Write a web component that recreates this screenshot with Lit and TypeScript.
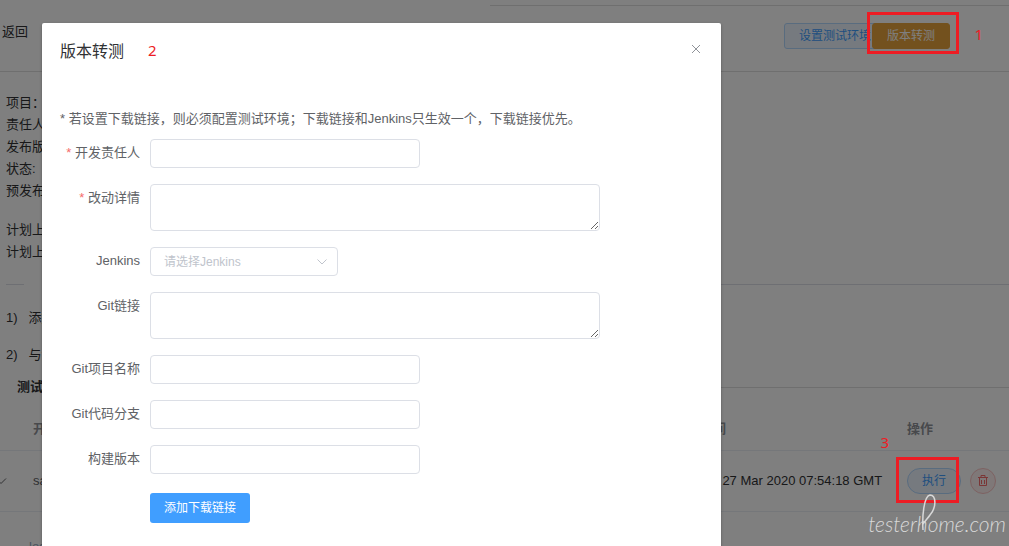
import { LitElement, html, css } from "lit";
import { customElement } from "lit/decorators.js";

const sans = css`"Liberation Sans", "Noto Sans CJK SC", sans-serif`;

@customElement("release-page")
class ReleasePage extends LitElement {
  static styles = css`
    :host { display: block; font: 13px/22px ${sans}; color: #303133; white-space: nowrap; }
    .tabs { height: 5px; margin-left: 490px; border-bottom: 1px solid #dedede; }
    .bar { display: flex; align-items: center; justify-content: space-between; height: 51px; padding: 0 59px 14px 2px; border-bottom: 1px solid #dedede; }
    .back { color: #303133; text-decoration: none; }
    .actions { display: flex; padding-top: 8px; }
    button { box-sizing: border-box; height: 26px; font: 12px/24px ${sans}; border: 1px solid #b3d8ff; background: #ecf5ff; color: #409eff; border-radius: 3px; padding: 0 14px; }
    .env { margin-right: -14px; }
    .warn { background: #e6a23c; border-color: #e6a23c; color: #fff; position: relative; }
    .info { padding: 20px 0 0 6px; }
    p { margin: 0; }
    .plan { padding: 17px 0 0 6px; }
    .divider { display: flex; align-items: center; height: 22px; margin: 10px 0 0 6px; }
    .divider::before, .divider::after { content: ""; height: 1px; background: #dcdfe6; }
    .divider::before { width: 18px; }
    .divider::after { flex: 1; }
    .divider span { padding: 0 18px; }
    .steps { display: grid; gap: 15px; padding: 12px 0 0 6px; }
    h3 { display: flex; align-items: center; gap: 16px; margin: 10px 0 0 17px; font-size: 13px; line-height: 22px; }
    h3::after { content: ""; flex: 1; height: 1px; background: #dedede; }
    table { width: 100%; table-layout: fixed; border-collapse: separate; border-spacing: 0; margin-top: 10px; }
    th, td { box-sizing: border-box; padding: 0; text-align: left; border-bottom: 1px solid #ebeef5; }
    th { height: 43px; color: #909399; font-weight: 700; }
    td { height: 61px; color: #606266; }
    .c-exp { width: 33px; }
    .c-time { width: 207px; }
    .c-op { width: 102px; }
    .ops { display: flex; gap: 9px; align-items: center; }
    .run { border-radius: 13px; }
    .del { width: 26px; padding: 0; border-radius: 50%; background: #fef0f0; border-color: #fbc4c4; color: #f56c6c; display: grid; place-items: center; }
    svg { display: block; fill: none; stroke: currentColor; }
    .time { color: #303133; }
    .detail { padding: 24px 0 0 29px; color: #99a9bf; }
  `;
  render() {
    return html`
      <div class="tabs"></div>
      <header class="bar">
        <a class="back" href="#">返回</a>
        <div class="actions">
          <button class="env">设置测试环境</button>
          <button class="warn">版本转测</button>
        </div>
      </header>
      <section class="info">
        <p>项目：</p><p>责任人:</p><p>发布版本:</p><p>状态:</p><p>预发布时间:</p>
      </section>
      <section class="plan"><p>计划上线时间:</p><p>计划上线版本:</p></section>
      <div class="divider"><span>说明</span></div>
      <section class="steps"><p>1)&nbsp;&nbsp; 添加测试环境</p><p>2)&nbsp;&nbsp; 与测试确认</p></section>
      <h3>测试记录</h3>
      <table>
        <colgroup><col class="c-exp" /><col /><col class="c-time" /><col class="c-op" /></colgroup>
        <thead><tr><th></th><th>开发</th><th>时间</th><th>操作</th></tr></thead>
        <tbody>
          <tr>
            <td><svg width="12" height="8" viewBox="-6 0 12 8"><path d="M-10 1.5 -5 6.5 0 1.5" /></svg></td>
            <td>sa</td>
            <td class="time">Fri, 27 Mar 2020 07:54:18 GMT</td>
            <td>
              <div class="ops">
                <button class="run">执行</button>
                <button class="del" aria-label="删除">
                  <svg width="12" height="12" viewBox="0 0 12 12"><path d="M1 2.500h10M4 2.500V.5h4v2M2.500 2.500v8h7v-8M4.500 5v4M7.500 5v4" /></svg>
                </button>
              </div>
            </td>
          </tr>
        </tbody>
      </table>
      <div class="detail">log</div>
    `;
  }
}

@customElement("transfer-dialog")
class TransferDialog extends LitElement {
  static styles = css`
    :host { display: block; box-sizing: border-box; background: #fff; border-radius: 2px; box-shadow: 0 1px 3px rgba(0, 0, 0, 0.3); padding: 18px; font: 13px/20px ${sans}; color: #606266; }
    header { display: flex; justify-content: space-between; align-items: flex-start; }
    h2 { margin: 0; font-size: 16px; line-height: 22px; font-weight: 400; color: #303133; }
    .close { border: 0; background: none; padding: 3px 2px; color: #909399; }
    svg { display: block; fill: none; stroke: currentColor; }
    .note { margin: 46px 0 10px; }
    form { display: grid; grid-template-columns: 80px minmax(0, 1fr); column-gap: 10px; row-gap: 16px; }
    label { text-align: right; line-height: 27px; white-space: nowrap; }
    .req::before { content: "* "; color: #f56c6c; }
    input, textarea, select { display: block; box-sizing: border-box; width: 100%; margin: 0; border: 1px solid #dcdfe6; border-radius: 4px; background: #fff; font: 12px/18px ${sans}; color: #606266; padding: 0 13px; outline: 0; }
    input { max-width: 270px; height: 29px; }
    textarea { max-width: 450px; height: 47px; padding: 5px 13px; resize: vertical; }
    .pick { position: relative; max-width: 188px; }
    select { appearance: none; height: 29px; color: #c0c4cc; }
    .arrow { position: absolute; right: 10px; top: 11px; color: #c0c4cc; pointer-events: none; }
    .add { grid-column: 2; justify-self: start; height: 30px; margin: 3px 0 30px; padding: 0 14px; border: 0; border-radius: 3px; background: #409eff; color: #fff; font: 12px/30px ${sans}; }
  `;
  render() {
    return html`
      <header>
        <h2>版本转测</h2>
        <button class="close" aria-label="关闭">
          <svg width="10" height="10" viewBox="0 0 10 10"><path d="M1 1 9 9M9 1 1 9" /></svg>
        </button>
      </header>
      <p class="note">* 若设置下载链接，则必须配置测试环境；下载链接和Jenkins只生效一个，下载链接优先。</p>
      <form @submit=${(e: Event) => e.preventDefault()}>
        <label class="req" for="owner">开发责任人</label><input id="owner" />
        <label class="req" for="changes">改动详情</label><textarea id="changes"></textarea>
        <label for="jenkins">Jenkins</label>
        <div class="pick">
          <select id="jenkins"><option>请选择Jenkins</option></select>
          <svg class="arrow" width="12" height="8" viewBox="0 0 12 8"><path d="M1.500 1.500 6 6 10.500 1.500" /></svg>
        </div>
        <label for="git">Git链接</label><textarea id="git"></textarea>
        <label for="project">Git项目名称</label><input id="project" />
        <label for="branch">Git代码分支</label><input id="branch" />
        <label for="build">构建版本</label><input id="build" />
        <button class="add" type="button">添加下载链接</button>
      </form>
    `;
  }
}

@customElement("app-root")
class AppRoot extends LitElement {
  static styles = css`
    :host { display: block; position: relative; height: 100vh; overflow: hidden; background: #fff; }
    .mask { position: absolute; inset: 0; overflow: hidden; display: flex; align-items: flex-start; padding: 23px 42px 0; background: rgba(0, 0, 0, 0.5); }
    transfer-dialog { flex: 0 1 679px; min-height: 100vh; }
    .box { position: absolute; box-sizing: border-box; border: 3px solid #ed1c24; }
    .box-transfer { right: 50px; top: 12px; width: 92px; height: 42px; }
    .box-run { right: 50px; top: 457px; width: 63px; height: 46px; }
    .num { position: absolute; font: 15px/20px "Noto Sans", sans-serif; color: #ed1c24; }
    .n1 { right: 26px; top: 24px; }
    .n2 { left: 148px; top: 40px; }
    .n3 { right: 120px; top: 432px; }
    .mark { position: absolute; right: 3px; top: 512px; font: italic 300 21px/24px Lato, sans-serif; color: #d8d8d8; }
    .swash { position: absolute; right: 70px; top: 494px; fill: none; stroke: #d8d8d8; stroke-width: 1.5; }
  `;
  render() {
    return html`
      <release-page></release-page>
      <div class="mask"><transfer-dialog role="dialog"></transfer-dialog></div>
      <div class="box box-transfer"></div>
      <div class="box box-run"></div>
      <span class="num n1">1</span>
      <span class="num n2">2</span>
      <span class="num n3">3</span>
      <span class="mark">testerhome.com</span>
      <svg class="swash" width="18" height="38" viewBox="0 0 18 38"><path d="M2 36C1 22 3 2 9 1c6 0 7 12 0 20C7 24 4 27 2 30" /></svg>
    `;
  }
}
